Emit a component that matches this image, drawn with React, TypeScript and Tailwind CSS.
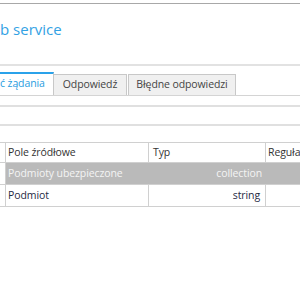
import React from "react";

export default function App() {
  return (
    <div
      className="w-[300px] h-[300px] bg-white overflow-hidden relative"
      style={{ fontFamily: '"Open Sans", "Noto Sans", sans-serif' }}
    >
      <div className="h-[3px]" />
      <div className="h-px bg-[#a8a8a8]" />
      <div className="h-[14px]" />
      <div className="text-[15px] leading-[22px] text-[#33a2e4] whitespace-nowrap">b service</div>
      <div className="h-[24px]" />
      <div className="h-[2px] bg-[#e2e2e2]" />
      <div className="h-[7px]" />
      {/* tabs */}
      <div className="flex items-end h-[23px] border-b border-[#d4d4d4] text-[10.5px] tracking-[-0.1px]">
        <div className="h-[23px] w-[54px] border-t-2 border-t-[#2aa2ea] border-r border-r-[#c8c8c8] bg-white leading-[19px] text-[#2a9de0] whitespace-nowrap pl-0">
          ć żądania
        </div>
        <div className="h-[21px] w-[73px] border border-l-0 border-[#c8c8c8] border-b-0 bg-[#f0f0f0] leading-[19px] text-[#444] text-center whitespace-nowrap">
          Odpowiedź
        </div>
        <div className="ml-px h-[21px] w-[108px] border border-[#c8c8c8] border-b-0 bg-[#f0f0f0] leading-[19px] text-[#444] text-center whitespace-nowrap">
          Błędne odpowiedzi
        </div>
      </div>
      <div className="h-[9px]" />
      <div className="h-[2px] bg-[#e0e0e0]" />
      <div className="h-[17px]" />
      <div className="h-[2px] bg-[#e0e0e0]" />
      <div className="h-[16px]" />
      {/* table */}
      <div className="border-t border-b border-[#d0d0d0] text-[10.5px] tracking-[-0.1px]">
        <div className="flex h-[20px] border-b border-[#d0d0d0] text-[#333]">
          <div className="w-[6px] border-r border-[#d0d0d0]" />
          <div className="w-[143px] border-r border-[#d0d0d0] pl-[2px] leading-[19px] whitespace-nowrap">Pole źródłowe</div>
          <div className="w-[117px] border-r border-[#d0d0d0] pl-[4px] leading-[19px] whitespace-nowrap">Typ</div>
          <div className="flex-1 pl-[2px] leading-[19px] whitespace-nowrap overflow-hidden">Reguła</div>
        </div>
        <div className="flex h-[22px] border-b border-[#d0d0d0]">
          <div className="w-[6px] border-r border-[#d0d0d0] bg-white" />
          <div className="flex-1 flex bg-[#bababa] text-[#f4f4f4]">
            <div className="w-[143px] pl-[2px] leading-[21px] whitespace-nowrap">Podmioty ubezpieczone</div>
            <div className="w-[117px] pr-[4px] text-right leading-[21px] whitespace-nowrap">collection</div>
            <div className="flex-1" />
          </div>
        </div>
        <div className="flex h-[21px] text-[#1f2a44]">
          <div className="w-[6px] border-r border-[#d0d0d0]" />
          <div className="w-[143px] border-r border-[#d0d0d0] pl-[2px] leading-[21px] whitespace-nowrap">Podmiot</div>
          <div className="w-[117px] border-r border-[#d0d0d0] pr-[5px] text-right leading-[21px] whitespace-nowrap relative">
            string
          </div>
          <div className="flex-1" />
        </div>
      </div>
    </div>
  );
}
